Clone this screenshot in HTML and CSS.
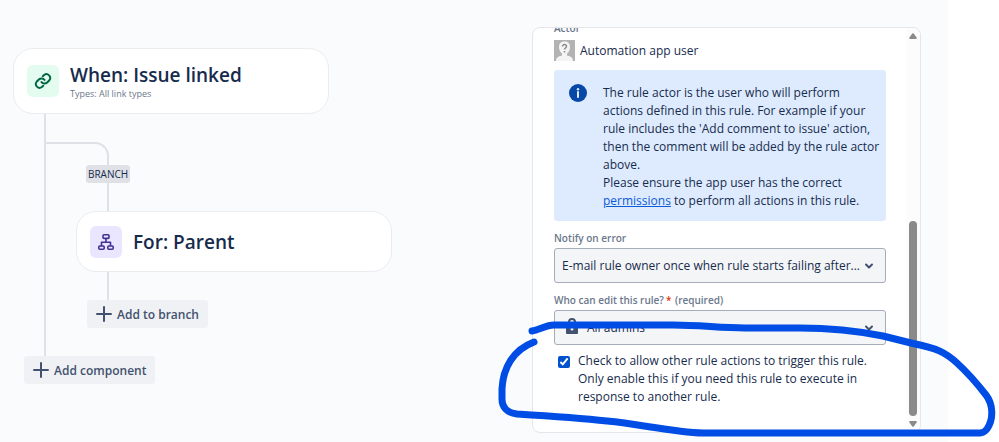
FILE: index.html
```html
<!DOCTYPE html>
<html lang="en">
<head>
    <meta charset="UTF-8">
    <meta name="viewport" content="width=device-width, initial-scale=1.0">
    <title>Automation rule</title>
    <link rel="stylesheet" href="styles.css">
</head>
<body>

    <div class="page">
        <main class="flow">
            <section class="card">
                <span class="card-icon trigger">
                    <svg width="18" height="18" viewBox="0 0 24 24" fill="none" stroke="currentColor" stroke-width="2.6" stroke-linecap="round">
                        <path d="M10 13.5a5 5 0 0 0 7.5.5l3-3a5 5 0 0 0-7-7l-1.8 1.7"/>
                        <path d="M14 10.5a5 5 0 0 0-7.5-.5l-3 3a5 5 0 0 0 7 7l1.8-1.7"/>
                    </svg>
                </span>
                <div>
                    <h1>When: Issue linked</h1>
                    <p class="card-detail">Types: All link types</p>
                </div>
            </section>

            <div class="trunk">
                <div class="elbow"></div>
                <div class="branch">
                    <span class="branch-label">BRANCH</span>
                    <div class="line"></div>
                    <section class="card small">
                        <span class="card-icon related">
                            <svg width="18" height="18" viewBox="0 0 18 18" fill="none" stroke="currentColor" stroke-width="1.6" stroke-linejoin="round">
                                <rect x="6" y="1.8" width="6" height="3.6" rx="1"/>
                                <rect x="1.8" y="13" width="5.4" height="3.2" rx="1"/>
                                <rect x="10.8" y="13" width="5.4" height="3.2" rx="1"/>
                                <path d="M9 5.4v3.8M4.5 13V9.2h9V13"/>
                            </svg>
                        </span>
                        <h2>For: Parent</h2>
                    </section>
                    <div class="line"></div>
                    <button class="add-button" type="button">
                        <svg width="16" height="16" viewBox="0 0 16 16" stroke="currentColor" stroke-width="2" stroke-linecap="round"><path d="M8 1v14M1 8h14"/></svg>
                        Add to branch
                    </button>
                </div>
            </div>
            <button class="add-button" type="button">
                <svg width="16" height="16" viewBox="0 0 16 16" stroke="currentColor" stroke-width="2" stroke-linecap="round"><path d="M8 1v14M1 8h14"/></svg>
                Add component
            </button>
        </main>

        <aside class="panel">
            <form class="details">
                <p class="label actor-label">Actor</p>
                <div class="actor">
                    <svg width="21" height="21" viewBox="0 0 21 21">
                        <rect width="21" height="21" fill="#b3b3b3"/>
                        <path d="M2 21c0-3 1.5-4.500 6-5.500v-2C6 12 5 9.500 5 7c0-3.500 2-5.500 5.500-5.500S16 3.500 16 7c0 2.500-1 5-3 6.500v2c4.500 1 6 2.500 6 5.500z" fill="#f4f4f4"/>
                        <path d="M8.500 6.500c0-2.700 4.200-2.500 4 0-.1 1.500-2 1.500-2 3M10.500 11v1.500" fill="none" stroke="#888" stroke-width="1.500"/>
                    </svg>
                    <span>Automation app user</span>
                </div>

                <div class="info">
                    <svg width="18" height="18" viewBox="0 0 18 18">
                        <circle cx="9" cy="9" r="9" fill="#0747a6"/>
                        <circle cx="9" cy="5.3" r="1.2" fill="#deebff"/>
                        <path d="M9 8v5" stroke="#deebff" stroke-width="2" stroke-linecap="round"/>
                    </svg>
                    <p>The rule actor is the user who will perform<br>
                        actions defined in this rule. For example if your<br>
                        rule includes the 'Add comment to issue' action,<br>
                        then the comment will be added by the rule actor<br>
                        above.<br>
                        Please ensure the app user has the correct<br>
                        <a href="#">permissions</a> to perform all actions in this rule.</p>
                </div>

                <label class="label" for="notify">Notify on error</label>
                <div class="select-box">
                    <select id="notify">
                        <option>E-mail rule owner once when rule starts failing after...</option>
                    </select>
                    <svg class="chevron" width="10" height="10" viewBox="0 0 10 10" fill="none" stroke="currentColor" stroke-width="2" stroke-linecap="round" stroke-linejoin="round"><path d="M2 3.5l3 3 3-3"/></svg>
                </div>

                <label class="label" for="editors">Who can edit this rule?<span class="star">*</span> (required)</label>
                <div class="select-box">
                    <select id="editors" class="with-icon">
                        <option>All admins</option>
                    </select>
                    <svg class="lock" width="14" height="18" viewBox="0 0 14 18">
                        <path d="M4 8V5a3 3 0 0 1 6 0v3" fill="none" stroke="currentColor" stroke-width="2"/>
                        <rect x="1" y="7" width="12" height="10" rx="1" fill="currentColor"/>
                        <circle cx="7" cy="12" r="1.5" fill="#f4f5f7"/>
                    </svg>
                    <svg class="chevron" width="10" height="10" viewBox="0 0 10 10" fill="none" stroke="currentColor" stroke-width="2" stroke-linecap="round" stroke-linejoin="round"><path d="M2 3.5l3 3 3-3"/></svg>
                </div>

                <div class="check">
                    <input type="checkbox" id="allow" checked>
                    <label for="allow">Check to allow other rule actions to trigger this rule.<br>
                        Only enable this if you need this rule to execute in<br>
                        response to another rule.</label>
                </div>
            </form>

            <div class="scrollbar">
                <svg width="8" height="6" viewBox="0 0 8 6"><path d="M3.3.6a1 1 0 0 1 1.4 0L7.600 4.500Q8 6 7 6H1Q0 6 .4 4.500z" fill="#8a8a8a"/></svg>
                <div class="thumb"></div>
                <svg width="8" height="6" viewBox="0 0 8 6"><path d="M3.3 5.400a1 1 0 0 0 1.400 0L7.600 1.500Q8 0 7 0H1Q0 0 .4 1.500z" fill="#8a8a8a"/></svg>
            </div>
        </aside>
    </div>

    <!-- Marker stroke round the checkbox -->
    <svg class="marker" width="509" height="122" viewBox="490 320 509 122" fill="none" stroke="#004de6" stroke-width="7" stroke-linecap="round" stroke-linejoin="round">
        <path d="M532 331C539 330 546 325 554 325L673 325C700 325 720 328 745 328L800 328C830 328 858 331 883 336L913 343.5C937 348 946 353 957 363C968 373 979 386 986 395C993 404 994 419 987 429Q984 433 980 433L703 433C672 432 640 424 607 421C580 418 550 416 517 414C507 413 502 407 502 399L502 389C503 368 513 350 534 342"/>
    </svg>

</body>
</html>
```

FILE: styles.css
```css
/* General Styling */
* {
    box-sizing: border-box;
}

body {
    margin: 0;
    font-family: 'Segoe UI', 'Open Sans', 'Noto Sans', sans-serif;
    font-size: 12px;
    line-height: 18px;
    color: #172b4d;
    background: #fff;
    position: relative;
}

h1, h2, p {
    margin: 0;
}

h1, h2 {
    font-size: 19px;
    font-weight: 600;
    line-height: 26px;
}

.page {
    display: flex;
    justify-content: space-between;
    align-items: flex-start;
    min-height: 100vh;
    margin-right: 51px;
    padding: 27px 27px 9px 13px;
    background: #fafbfd;
}

/* Rule chain */
.flow {
    padding-top: 21px;
}

.card {
    display: flex;
    align-items: center;
    gap: 11px;
    width: 316px;
    height: 66px;
    padding: 0 13px;
    background: #fff;
    border: 1px solid #ebecf0;
    border-radius: 20px;
}

.card.small {
    height: 61px;
}

.card-icon {
    display: flex;
    align-items: center;
    justify-content: center;
    width: 32px;
    height: 32px;
    border-radius: 6px;
}

.trigger {
    background: #e3fcef;
    color: #006644;
}

.related {
    background: #eae6ff;
    color: #403294;
}

.card-detail {
    font-size: 9px;
    line-height: 12px;
    color: #6b778c;
}

.trunk {
    margin-left: 31px;
    padding: 28px 0;
    border-left: 2px solid #dfe1e6;
}

.elbow {
    width: 63px;
    height: 23px;
    border-top: 2px solid #dfe1e6;
    border-right: 2px solid #dfe1e6;
    border-top-right-radius: 14px;
}

.branch {
    margin-left: 30px;
}

.branch-label {
    display: block;
    width: 44px;
    margin-left: 10px;
    border-radius: 3px;
    background: #dfe1e6;
    font-size: 10px;
    text-align: center;
}

.line {
    width: 2px;
    height: 28px;
    margin-left: 31px;
    background: #dfe1e6;
}

.add-button {
    display: flex;
    align-items: center;
    gap: 5px;
    height: 28px;
    margin-left: 11px;
    padding: 0 9px;
    border: none;
    border-radius: 3px;
    background: #f0f1f4;
    color: #42526e;
    font-family: inherit;
    font-size: 12px;
    font-weight: 600;
    cursor: pointer;
}

.add-button:hover {
    background: #e4e6ea;
}

/* Rule details */
.panel {
    display: flex;
    width: 389px;
    overflow: hidden;
    background: #fff;
    border: 1px solid #e4e6ea;
    border-radius: 8px;
}

.details {
    flex: 1;
    padding: 0 20px 26px 21px;
}

.label {
    display: block;
    margin-top: 9px;
    font-size: 10px;
    font-weight: 600;
    line-height: 16px;
    color: #6b778c;
}

.actor-label {
    margin-top: -8px;
}

.star {
    margin: 0 1px 0 2px;
    color: #de350b;
}

.actor {
    display: flex;
    align-items: center;
    gap: 5px;
    margin: 4px 0 9px;
}

.info {
    display: flex;
    gap: 16px;
    padding: 14px 0 11px 15px;
    border-radius: 3px;
    background: #deebff;
    white-space: nowrap;
}

.info a {
    color: #0c5bd6;
}

.select-box {
    position: relative;
    margin-top: 2px;
}

select {
    display: block;
    width: 100%;
    height: 35px;
    padding: 0 7px;
    border: 1px solid #a5adba;
    border-radius: 3px;
    background: #f4f5f7;
    color: #172b4d;
    font-family: inherit;
    font-size: 12px;
    appearance: none;
}

.with-icon {
    padding-left: 32px;
}

.chevron {
    position: absolute;
    top: 13px;
    right: 12px;
    color: #42526e;
}

.lock {
    position: absolute;
    top: 7px;
    left: 11px;
    color: #42526e;
}

.check {
    display: flex;
    align-items: flex-start;
    gap: 8px;
    margin-top: 7px;
    padding-left: 4px;
    white-space: nowrap;
}

.check input {
    width: 12px;
    height: 12px;
    margin: 4px 0;
    accent-color: #0052cc;
}

.scrollbar {
    display: flex;
    flex-direction: column;
    align-items: center;
    width: 14px;
    padding: 5px 0;
    background: #fcfcfc;
}

.thumb {
    width: 8px;
    height: 195px;
    margin-top: auto;
    margin-bottom: 5px;
    border-radius: 4px;
    background: #8a8a8a;
}

/* Marker */
.marker {
    position: absolute;
    top: 320px;
    left: 490px;
    pointer-events: none;
}
```
